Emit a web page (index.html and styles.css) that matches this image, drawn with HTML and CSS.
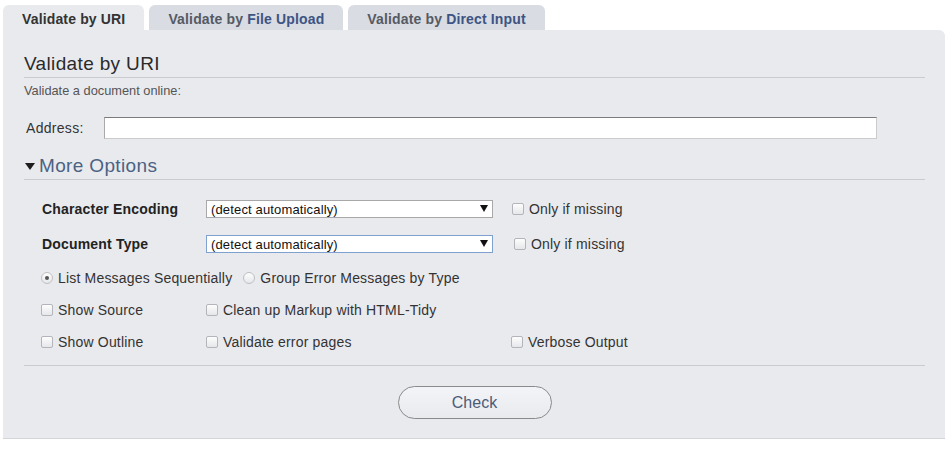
FILE: index.html
```html
<!DOCTYPE html>
<html lang="en">
<head>
  <meta charset="UTF-8">
  <title>Markup Validation Service</title>
  <link rel="stylesheet" href="styles.css">
</head>
<body>

  <div class="validator">
    <ul class="tabs">
      <li class="tab active">Validate by URI</li>
      <li class="tab">Validate by <span class="hl">File Upload</span></li>
      <li class="tab">Validate by <span class="hl">Direct Input</span></li>
    </ul>

    <form class="panel" id="validateByUri">
      <h2>Validate by URI</h2>
      <p class="intro">Validate a document online:</p>

      <div class="address-row">
        <label for="uri">Address:</label>
        <input type="text" id="uri">
      </div>

      <h3 class="more-options"><span class="caret"></span>More Options</h3>

      <div class="options">
        <div class="opt-row">
          <span class="opt-label">Character Encoding</span>
          <span class="select-wrap">
            <select><option>(detect automatically)</option></select>
            <span class="arrow"></span>
          </span>
          <label class="check"><input type="checkbox"> Only if missing</label>
        </div>

        <div class="opt-row tall">
          <span class="opt-label">Document Type</span>
          <span class="select-wrap focused">
            <select><option>(detect automatically)</option></select>
            <span class="arrow"></span>
          </span>
          <label class="check shift"><input type="checkbox"> Only if missing</label>
        </div>

        <div class="opt-row short radios">
          <label class="check"><input type="radio" name="group" checked> List Messages Sequentially</label>
          <label class="check"><input type="radio" name="group"> Group Error Messages by Type</label>
        </div>

        <div class="opt-row short">
          <label class="check col1"><input type="checkbox"> Show Source</label>
          <label class="check col2"><input type="checkbox"> Clean up Markup with HTML-Tidy</label>
        </div>

        <div class="opt-row short">
          <label class="check col1"><input type="checkbox"> Show Outline</label>
          <label class="check col2"><input type="checkbox"> Validate error pages</label>
          <label class="check"><input type="checkbox"> Verbose Output</label>
        </div>
      </div>

      <div class="submit-row">
        <button type="submit">Check</button>
      </div>
    </form>
  </div>

</body>
</html>
```

FILE: styles.css
```css
body {
  margin: 0;
  font-family: "Liberation Sans", Arial, sans-serif;
  background-color: #fff;
  color: #333;
}

.validator {
  width: 942px;
  padding: 5px 0 0 3px;
}

/* tabs */
.tabs {
  display: flex;
  gap: 5px;
  margin: 0;
  padding: 0;
  list-style: none;
}

.tab {
  height: 25px;
  line-height: 28px;
  padding: 0 19px;
  background-color: #d9dce3;
  border-radius: 6px 6px 0 0;
  font-size: 14px;
  font-weight: bold;
  letter-spacing: 0.15px;
  color: #555a63;
}

.tab.active {
  background-color: #e9eaee;
  color: #333;
}

.tab .hl {
  color: #3d5483;
}

/* panel */
.panel {
  background-color: #e9eaee;
  padding: 22px 20px 19px 21px;
  border-top-right-radius: 6px;
  border-bottom: 1px solid #d4d5d9;
}

.panel h2 {
  margin: 0;
  font-size: 19px;
  font-weight: normal;
  line-height: 24px;
  letter-spacing: 0.35px;
  color: #2b2b2b;
  padding-bottom: 1px;
  border-bottom: 1px solid #c9cbd0;
}

.intro {
  margin: 6px 0 0;
  font-size: 12.8px;
  line-height: 14px;
  color: #555;
}

.address-row {
  display: flex;
  align-items: center;
  margin-top: 19px;
}

.address-row label {
  width: 78px;
  padding-left: 2px;
  font-size: 14px;
  letter-spacing: 0.3px;
  color: #333;
}

.address-row input {
  box-sizing: border-box;
  width: 773px;
  height: 22px;
  margin: 0;
  border: 1px solid #cbcbcb;
  border-top-color: #7b7b7b;
  border-left-color: #a9a9a9;
  background: #fff;
}

.more-options {
  display: flex;
  align-items: center;
  margin: 15px 0 0;
  font-size: 19px;
  font-weight: normal;
  line-height: 24px;
  letter-spacing: 0.35px;
  color: #4b6283;
  padding-bottom: 1px;
  border-bottom: 1px solid #c9cbd0;
}

.caret {
  width: 0;
  height: 0;
  margin: 0 4px 0 1px;
  border-left: 5.5px solid transparent;
  border-right: 5.5px solid transparent;
  border-top: 7px solid #1e1e1e;
}

/* option rows */
.options {
  margin-top: 12px;
  padding-left: 17px;
  padding-bottom: 7px;
  border-bottom: 1px solid #c9cbd0;
}

.opt-row {
  display: flex;
  align-items: center;
  height: 34px;
  font-size: 14px;
  letter-spacing: 0.18px;
}

.opt-row.tall {
  height: 36px;
}

.opt-row.short {
  height: 32px;
}

.opt-label {
  width: 164px;
  padding-left: 1px;
  font-weight: bold;
  color: #222;
}

.select-wrap {
  position: relative;
  display: block;
  width: 287px;
  margin-right: 19px;
}

.select-wrap select {
  -webkit-appearance: none;
  appearance: none;
  display: block;
  box-sizing: border-box;
  width: 100%;
  height: 18px;
  margin: 0;
  padding: 0 0 0 4px;
  border: 1px solid #a8a8a8;
  border-radius: 0;
  background: #fff;
  font-family: "Liberation Sans", Arial, sans-serif;
  font-size: 13px;
  letter-spacing: 0.15px;
  color: #111;
}

.select-wrap.focused select {
  border-color: #7fa1cf;
}

.arrow {
  position: absolute;
  right: 5px;
  top: 5px;
  width: 0;
  height: 0;
  border-left: 4px solid transparent;
  border-right: 4px solid transparent;
  border-top: 7px solid #111;
}

.check {
  display: flex;
  align-items: center;
  gap: 5px;
  color: #333;
}

.check.shift {
  margin-left: 2px;
}

.radios {
  gap: 11px;
}

.col1 {
  width: 165px;
}

.col2 {
  width: 305px;
}

.check input {
  -webkit-appearance: none;
  appearance: none;
  box-sizing: border-box;
  width: 12px;
  height: 12px;
  margin: 0;
  border: 1px solid #b3b5ba;
  border-radius: 2px;
  background: linear-gradient(#fdfdfd, #e6e7ea);
}

.check input[type="radio"] {
  border-radius: 50%;
  border-color: #bdbfc3;
  position: relative;
}

.check input[type="radio"]:checked::after {
  content: "";
  position: absolute;
  left: 3px;
  top: 3px;
  width: 4px;
  height: 4px;
  border-radius: 50%;
  background: #555;
}

/* submit */
.submit-row {
  display: flex;
  justify-content: center;
  margin-top: 20px;
}

.submit-row button {
  width: 154px;
  height: 33px;
  border: 1px solid #8a8a8a;
  border-radius: 17px;
  background: linear-gradient(#f3f4f7, #e9eaee);
  font-family: "Liberation Sans", Arial, sans-serif;
  font-size: 16px;
  color: #4b5b78;
  cursor: pointer;
}
```
